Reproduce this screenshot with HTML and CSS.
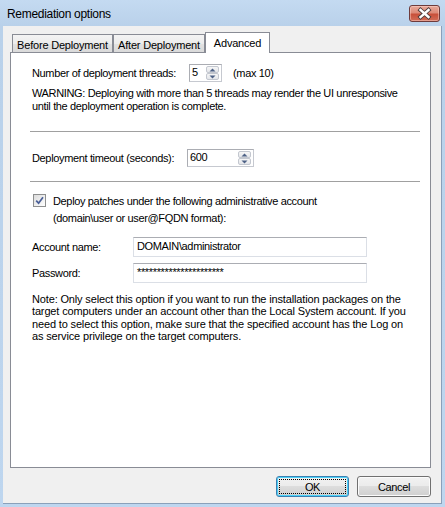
FILE: index.html
```html
<!DOCTYPE html>
<html>
<head>
<meta charset="utf-8">
<link rel="stylesheet" href="styles.css">
</head>
<body>
<div class="window">
  <div class="titlebar">
    <span class="title">Remediation options</span>
    <div class="close">
      <svg width="29" height="15" viewBox="0 0 29 15">
        <path d="M10.5 4 L18.5 11 M18.5 4 L10.5 11" stroke="#4a3a3a" stroke-width="4.2" stroke-linecap="square"/>
        <path d="M10.5 4 L18.5 11 M18.5 4 L10.5 11" stroke="#ffffff" stroke-width="2.4" stroke-linecap="square"/>
      </svg>
    </div>
  </div>
  <div class="client">
    <div class="tabs">
      <div class="tab tab1">Before Deployment</div>
      <div class="tab tab2">After Deployment</div>
      <div class="tab tab3 active">Advanced</div>
    </div>
    <div class="panel">
      <div class="row r1">
        <span class="lbl1">Number of deployment threads:</span>
        <div class="spin spin1">
          <span class="val">5</span>
          <div class="arrows">
            <div class="sbtn"><svg width="7" height="4" viewBox="0 0 7 4"><path d="M0.5 3.5 L3.5 0.5 L6.5 3.5 Z" fill="#4d6185"/></svg></div>
            <div class="sbtn"><svg width="7" height="4" viewBox="0 0 7 4"><path d="M0.5 0.5 L3.5 3.5 L6.5 0.5 Z" fill="#4d6185"/></svg></div>
          </div>
        </div>
        <span class="max">(max 10)</span>
      </div>
      <div class="warn">WARNING: Deploying with more than 5 threads may render the UI unresponsive<br>until the deployment operation is complete.</div>
      <div class="sep"></div>
      <div class="row r2">
        <span class="lbl2">Deployment timeout (seconds):</span>
        <div class="spin spin2">
          <span class="val">600</span>
          <div class="arrows">
            <div class="sbtn"><svg width="7" height="4" viewBox="0 0 7 4"><path d="M0.5 3.5 L3.5 0.5 L6.5 3.5 Z" fill="#4d6185"/></svg></div>
            <div class="sbtn"><svg width="7" height="4" viewBox="0 0 7 4"><path d="M0.5 0.5 L3.5 3.5 L6.5 0.5 Z" fill="#4d6185"/></svg></div>
          </div>
        </div>
      </div>
      <div class="sep sep2"></div>
      <div class="row chkrow">
        <div class="chk">
          <svg width="11" height="11" viewBox="0 0 11 11"><path d="M2.2 5.6 L4.6 8.2 L9 2.2" fill="none" stroke="#4a5f97" stroke-width="1.7"/></svg>
        </div>
        <span class="chklbl">Deploy patches under the following administrative account</span>
      </div>
      <div class="hint">(domain\user or user@FQDN format):</div>
      <div class="row acct">
        <span class="lbl3">Account name:</span>
        <div class="input">DOMAIN\administrator</div>
      </div>
      <div class="row pw">
        <span class="lbl3">Password:</span>
        <div class="input">**********************</div>
      </div>
      <div class="note">Note: Only select this option if you want to run the installation packages on the<br>target computers under an account other than the Local System account. If you<br>need to select this option, make sure that the specified account has the Log on<br>as service privilege on the target computers.</div>
    </div>
    <div class="buttons">
      <button class="btn default">OK</button>
      <button class="btn cancel">Cancel</button>
    </div>
  </div>
</div>
</body>
</html>
```

FILE: styles.css
```css
* { box-sizing: border-box; }
html, body { margin: 0; padding: 0; }
body {
  width: 445px;
  height: 507px;
  overflow: hidden;
  font-family: "Liberation Sans", Arial, sans-serif;
  font-size: 11px;
  letter-spacing: -0.35px;
  color: #000;
  background: #bdd5ee;
}
.window {
  width: 445px;
  height: 507px;
  display: flex;
  flex-direction: column;
  background: linear-gradient(to bottom, #c4daf1 0, #b9d1ea 26px, #bed6ef 100%);
}
.titlebar {
  height: 26px;
  flex: none;
  display: flex;
  justify-content: space-between;
  align-items: flex-start;
  padding: 0 5px 0 7px;
}
.title {
  font-size: 12px;
  letter-spacing: -0.3px;
  line-height: 14px;
  margin-top: 7px;
}
.close {
  width: 31px;
  height: 17px;
  margin-top: 5px;
  border: 1px solid #6e3b3b;
  border-radius: 3px;
  background: linear-gradient(to bottom, #e9a99a 0, #dd8a78 45%, #c8503a 55%, #d26d58 100%);
  box-shadow: inset 0 0 0 1px rgba(255, 220, 210, 0.45);
  display: flex;
}
.client {
  flex: 1;
  margin: 0 3px 3px 3px;
  border-right: 1px solid #8aa0ba;
  border-bottom: 1px solid #8aa0ba;
  background: #f0f0f0;
  display: flex;
  flex-direction: column;
  padding: 6px 10px 6px 7px;
}
.tabs {
  display: flex;
  align-items: flex-end;
  height: 20px;
  flex: none;
  padding-left: 2px;
  position: relative;
  z-index: 1;
}
.tab {
  height: 18px;
  border: 1px solid #898c95;
  border-bottom: none;
  background: linear-gradient(to bottom, #f4f4f4 0, #ececec 50%, #e2e2e2 50%, #dadada 100%);
  display: flex;
  justify-content: center;
  align-items: center;
  padding-top: 2px;
  white-space: nowrap;
  letter-spacing: -0.2px;
}
.tab1 { width: 101px; }
.tab2 { width: 92px; }
.tab3 { width: 65px; }
.tab.active {
  height: 21px;
  margin-bottom: -1px;
  background: #fff;
  padding-top: 0;
}
.panel {
  flex: 1;
  background: #fff;
  border: 1px solid #898c95;
  padding-top: 11px;
}
.row {
  display: flex;
  align-items: center;
  margin-left: 21px;
  white-space: nowrap;
}
.r1 { height: 18px; }
.lbl1 { width: 157px; }
.spin {
  height: 18px;
  border: 1px solid #abadb3;
  border-right-color: #c6c9d0;
  border-bottom-color: #c6c9d0;
  display: flex;
  background: #fff;
}
.spin1 { width: 33px; }
.spin2 { width: 67px; }
.spin .val {
  flex: 1;
  padding-left: 2px;
  line-height: 15px;
}
.arrows {
  width: 15px;
  display: flex;
  flex-direction: column;
  padding: 1px 2px 1px 0;
}
.sbtn {
  flex: 1;
  border: 1px solid #c3c7cf;
  border-radius: 2px;
  background: linear-gradient(to bottom, #f6f6f6, #e4e6ea);
  display: flex;
  align-items: center;
  justify-content: center;
}
.max { margin-left: 11px; }
.warn {
  margin: 5px 0 0 21px;
  line-height: 13px;
  white-space: nowrap;
}
.sep {
  height: 1px;
  background: #a0a0a0;
  margin: 18px 10px 0 19px;
}
.r2 {
  margin-top: 17px;
  height: 18px;
}
.lbl2 { width: 155px; }
.sep2 { margin-top: 14px; }
.chkrow {
  margin-top: 12px;
  height: 13px;
}
.chk {
  width: 13px;
  height: 13px;
  margin-left: 1px;
  border: 1px solid #8e8f8f;
  background: linear-gradient(135deg, #dcdcdc, #ffffff);
  display: flex;
}
.chklbl { margin-left: 7px; }
.hint {
  margin: 5px 0 0 42px;
  line-height: 13px;
}
.acct {
  margin-top: 12px;
  height: 20px;
}
.pw {
  margin-top: 6px;
  height: 20px;
}
.lbl3 { width: 101px; }
.input {
  width: 234px;
  height: 20px;
  border: 1px solid #dbdfe6;
  border-top-color: #abadb3;
  padding-left: 3px;
  line-height: 17px;
  background: #fff;
}
.note {
  margin: 10px 0 0 21px;
  line-height: 12.4px;
  white-space: nowrap;
  letter-spacing: -0.15px;
}
.buttons {
  display: flex;
  justify-content: flex-end;
  gap: 8px;
  margin-top: 8px;
  height: 21px;
  flex: none;
}
.btn {
  width: 73px;
  height: 21px;
  border: 1px solid #707070;
  border-radius: 3px;
  background: linear-gradient(to bottom, #f2f2f2 0, #ebebeb 50%, #dddddd 50%, #cfcfcf 100%);
  box-shadow: inset 0 0 0 1px #fbfbfb;
  font-family: inherit;
  font-size: 11px;
  letter-spacing: -0.35px;
  color: #000;
  padding: 0;
}
.btn.cancel { width: 74px; }
.btn.default {
  border-color: #3c7fb1;
  box-shadow: inset 0 0 0 1px #48d0f8;
  outline: 1px dotted #000;
  outline-offset: -4px;
}
```
